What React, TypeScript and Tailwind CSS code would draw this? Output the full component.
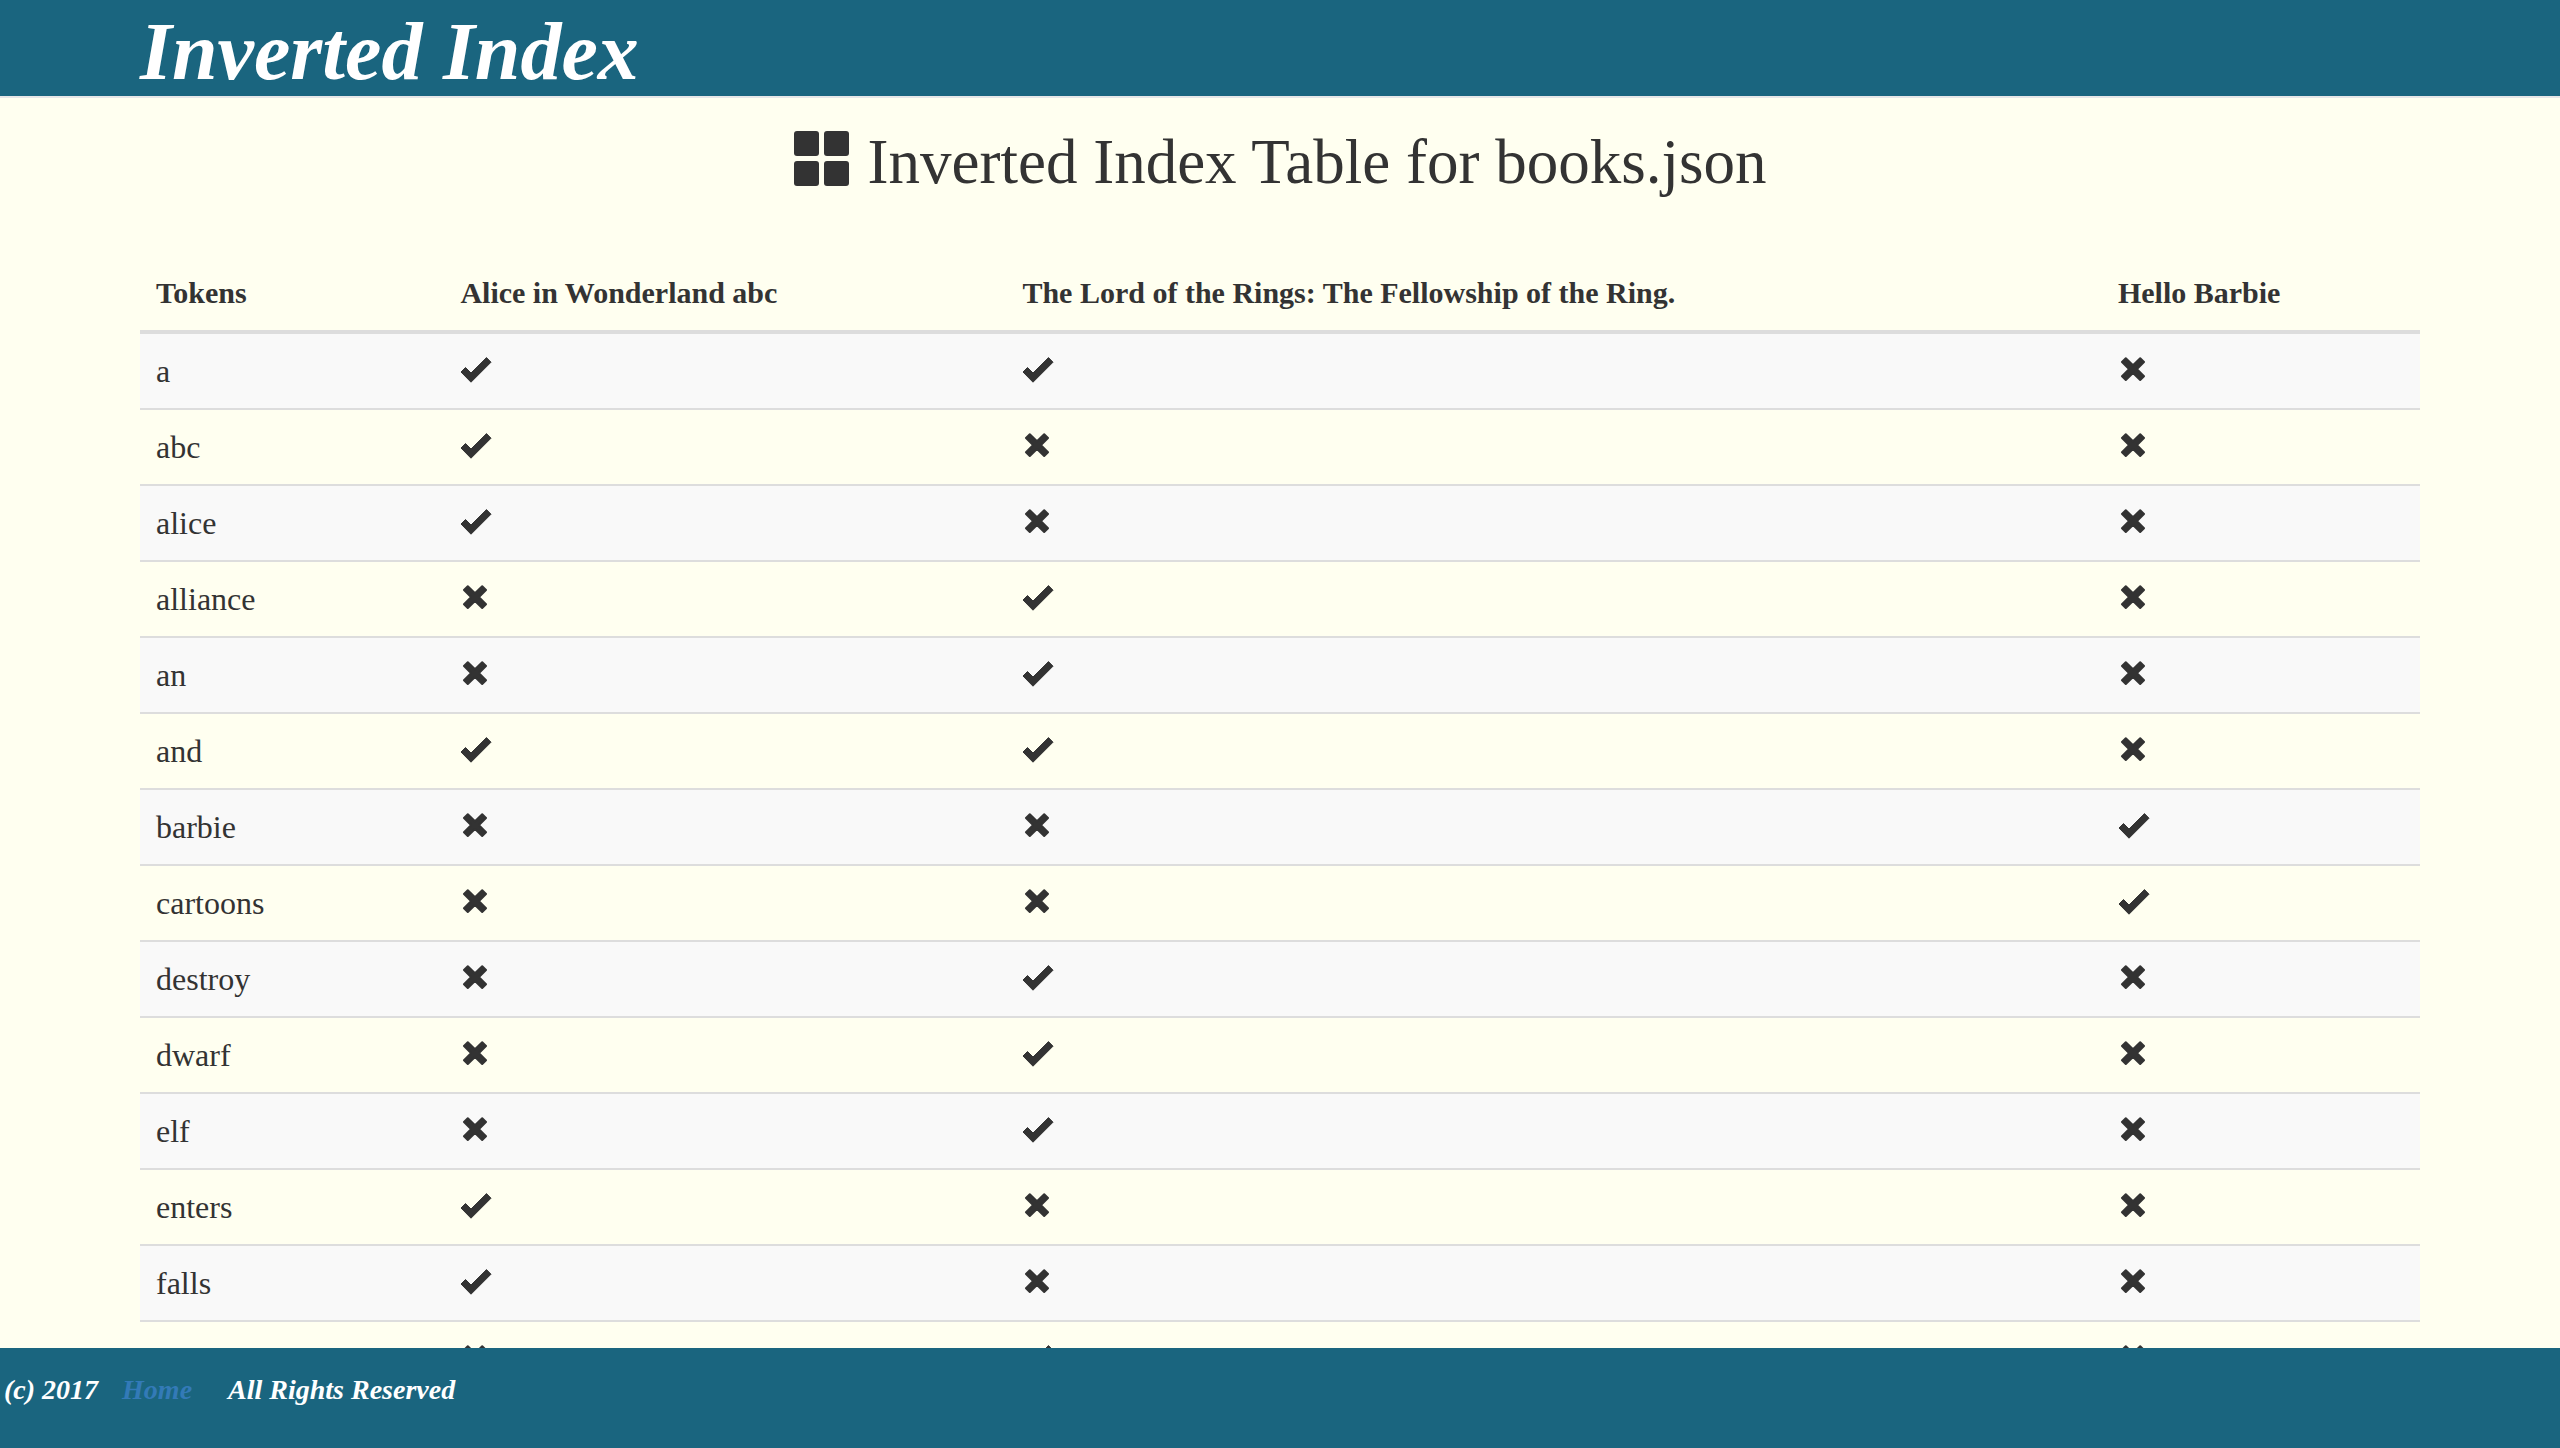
type Row = { token: string; found: boolean[] };

const books = [
  'Alice in Wonderland abc',
  'The Lord of the Rings: The Fellowship of the Ring.',
  'Hello Barbie',
];

const rows: Row[] = [
  { token: 'a', found: [true, true, false] },
  { token: 'abc', found: [true, false, false] },
  { token: 'alice', found: [true, false, false] },
  { token: 'alliance', found: [false, true, false] },
  { token: 'an', found: [false, true, false] },
  { token: 'and', found: [true, true, false] },
  { token: 'barbie', found: [false, false, true] },
  { token: 'cartoons', found: [false, false, true] },
  { token: 'destroy', found: [false, true, false] },
  { token: 'dwarf', found: [false, true, false] },
  { token: 'elf', found: [false, true, false] },
  { token: 'enters', found: [true, false, false] },
  { token: 'falls', found: [true, false, false] },
  { token: 'fellowship', found: [false, true, false] },
];

function CheckIcon() {
  return (
    <svg
      role="img"
      aria-label="yes"
      className="block h-[28px] w-[32px]"
      viewBox="0 0 32 28"
      fill="currentColor"
      stroke="currentColor"
      strokeWidth="1"
      strokeLinejoin="round"
    >
      <path d="M1 15 5.5 10.5 11 16 26.5 .6 31 5.2 11 25.2Z" />
    </svg>
  );
}

function CrossIcon() {
  return (
    <svg
      role="img"
      aria-label="no"
      className="block h-[28px] w-[32px]"
      viewBox="0 0 32 28"
      fill="currentColor"
      stroke="currentColor"
      strokeWidth="2"
      strokeLinejoin="round"
    >
      <path d="M4 5 7.8 1.2 15 8.2 22.2 1.2 26 5 19 12.1 26 19.2 22.2 23 15 16 7.8 23 4 19.2 11 12.1Z" />
    </svg>
  );
}

function GridIcon() {
  return (
    <svg aria-hidden="true" className="h-[62px] w-[56px]" viewBox="0 0 56 62" fill="currentColor">
      <rect x="0" y="0" width="25" height="25" rx="3" />
      <rect x="30" y="0" width="25" height="25" rx="3" />
      <rect x="0" y="30" width="25" height="25" rx="3" />
      <rect x="30" y="30" width="25" height="25" rx="3" />
    </svg>
  );
}

export default function App() {
  return (
    <div className="flex min-h-screen flex-col bg-[#fffff0] font-['Liberation_Serif',serif] text-[#333333]">
      <header className="border-b-2 border-[#e7e7e7] bg-[#1a657f]">
        <div className="mx-auto max-w-[2280px] pt-2">
          <h1 className="text-[82px] leading-[88px] font-bold text-white italic">Inverted Index</h1>
        </div>
      </header>

      <main className="mx-auto w-full max-w-[2280px] pt-[30px]">
        <h2 className="mb-[60px] flex items-center justify-center gap-[18px] text-[63px] leading-[68px]">
          <GridIcon />
          Inverted Index Table for books.json
        </h2>

        <table className="w-full table-fixed border-separate border-spacing-0 text-left">
          <colgroup>
            <col className="w-[13.35%]" />
            <col className="w-[24.65%]" />
            <col className="w-[48.05%]" />
            <col className="w-[13.95%]" />
          </colgroup>
          <thead className="text-[30px] leading-[42px]">
            <tr>
              <th scope="col" className="border-b-4 border-[#dddddd] p-4 font-bold">
                Tokens
              </th>
              {books.map((book) => (
                <th key={book} scope="col" className="border-b-4 border-[#dddddd] p-4 font-bold">
                  {book}
                </th>
              ))}
            </tr>
          </thead>
          <tbody className="text-[32px] leading-[42px]">
            {rows.map((row) => (
              <tr key={row.token} className="group odd:bg-[#f9f9f9]">
                <td className="border-t-2 border-[#dddddd] p-4 group-first:border-t-0">{row.token}</td>
                {row.found.map((hit, i) => (
                  <td key={books[i]} className="border-t-2 border-[#dddddd] p-4 group-first:border-t-0">
                    {hit ? <CheckIcon /> : <CrossIcon />}
                  </td>
                ))}
              </tr>
            ))}
          </tbody>
        </table>
      </main>

      <footer className="fixed inset-x-0 bottom-0 h-[100px] bg-[#1a657f] px-1 pt-[22px] text-[28px] leading-[40px] font-bold text-white italic">
        <p className="flex">
          <span>(c) 2017</span>
          <a href="#home" className="ml-6 text-[#337ab7]">
            Home
          </a>
          <span className="ml-9">All Rights Reserved</span>
        </p>
      </footer>
    </div>
  );
}
